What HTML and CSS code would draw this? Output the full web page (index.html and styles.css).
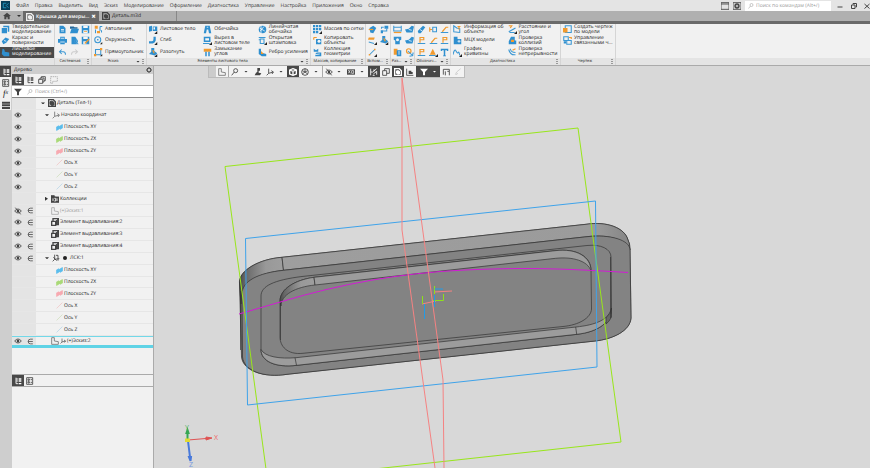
FILE: index.html
```html
<!DOCTYPE html>
<html lang="ru">
<head>
<meta charset="utf-8">
<title>Крышка для амперметра</title>
<link rel="stylesheet" href="styles.css">
</head>
<body>
<svg class="sprite" aria-hidden="true">
  <symbol id="solid" viewBox="0 0 12 12"><path class="b" d="M1 4h7v7H1zM3 1h8v8H9V3H3z"/></symbol>
  <symbol id="surface" viewBox="0 0 12 12"><path class="b" d="M1 7l5-5 5 2-4 5-4 2z"/><path class="w" d="M4 6l3 1"/></symbol>
  <symbol id="sheet" viewBox="0 0 12 12"><path class="b" d="M2 1q3 0 3 4l6 1v5H4L1 8z"/></symbol>
  <symbol id="doc" viewBox="0 0 12 12"><path class="b" d="M2 1h5l3 3v7H2z"/><path class="w" d="M4 6h4M4 8h4"/></symbol>
  <symbol id="folder" viewBox="0 0 12 12"><path class="d" d="M0 2h5l1 1h4v2H0z"/><path class="b" d="M2 5h10l-2 6H0z"/></symbol>
  <symbol id="save" viewBox="0 0 12 12"><path class="b" d="M1 1h10v10H1z"/><path class="wf" d="M3 1h6v3H3zM3 7h6v4H3z"/><path class="of" d="M4 8h4v1H4z"/></symbol>
  <symbol id="print" viewBox="0 0 12 12"><path class="b" d="M3 1h6v3h3v5H9v2H3V9H0V4h3z"/><path class="w" d="M4 3h4M3 8h6"/></symbol>
  <symbol id="preview" viewBox="0 0 12 12"><path class="b" d="M2 1h5l2 3v7H2z"/><circle class="bs" cx="8" cy="7" r="2"/><path class="bs" d="M9 9l2 2"/></symbol>
  <symbol id="saveas" viewBox="0 0 12 12"><path class="b" d="M1 1h10v10H1z"/><path class="wf" d="M3 1h6v3H3zM3 7h4v4H3z"/><path class="o" d="M5 10l6-6"/></symbol>
  <symbol id="undo" viewBox="0 0 12 12"><path class="bs" d="M5 2L2 5l3 3M2 5h5q3 0 3 4"/></symbol>
  <symbol id="redo" viewBox="0 0 12 12"><path class="g" d="M7 2l3 3-3 3M10 5H5Q2 5 2 9"/></symbol>
  <symbol id="autoline" viewBox="0 0 12 12"><path class="of" d="M1 1h4v4H1zM4 8h4v3H4z"/><path class="bs" d="M8 2v6M8 2h3M2 6v5M10 7v3"/></symbol>
  <symbol id="circle" viewBox="0 0 12 12"><circle class="bs" cx="5" cy="5" r="4"/><path class="bs" d="M4 5h2M5 4v2"/><path class="k" d="M11 8v3H8z"/></symbol>
  <symbol id="rect" viewBox="0 0 12 12"><path class="bs" d="M2 2h7v7H2z"/><path class="of" d="M0 8h3v3H0zM8 0h3v3H8z"/><path class="k" d="M11 8v3H8z"/></symbol>
  <symbol id="body" viewBox="0 0 12 12"><path class="b" d="M0 9V2l4-1v7zM5 2h6v6H5z"/><path class="wf" d="M6 3h2v3H6z"/><path class="k" d="M11 8v4H7z"/></symbol>
  <symbol id="bend" viewBox="0 0 12 12"><path class="b" d="M6 1h3v5q-1 3-4 4H0V7h4q2 0 2-3z"/><path class="k" d="M11 8v4H7z"/></symbol>
  <symbol id="unbend" viewBox="0 0 12 12"><path class="b" d="M3 0h4v4l4 3-3 3-8-2 3-3z"/><path class="o" d="M5 3l2 4"/><path class="k" d="M11 8v4H7z"/></symbol>
  <symbol id="shell" viewBox="0 0 12 12"><path class="b" d="M3 1h6l2 10H8L7 6H5L4 11H1z"/><path class="w" d="M5 3h2"/></symbol>
  <symbol id="cut" viewBox="0 0 12 12"><path class="b" d="M1 1h9v7H1z"/><path class="wf" d="M3 3h5v3H3z"/><path class="bs" d="M0 10h9"/><path class="k" d="M12 8v4H8z"/></symbol>
  <symbol id="corner" viewBox="0 0 12 12"><path class="of" d="M1 1h10v4H1z"/><path class="b" d="M3 5h2v6H3zM7 5h2v6H7z"/></symbol>
  <symbol id="ruled" viewBox="0 0 12 12"><circle class="b" cx="6" cy="6" r="5"/><path class="w" d="M4 1v10M2 4l7 4M8 2L3 8"/></symbol>
  <symbol id="stamp" viewBox="0 0 12 12"><path class="bs" d="M1 2h9M3 4h5v6H3zM1 5h2"/><path class="k" d="M12 8v4H8z"/></symbol>
  <symbol id="rib" viewBox="0 0 12 12"><path class="b" d="M1 1h3v5l7 2v3H5L1 8z"/><path class="of" d="M4 4l4 4H4z"/></symbol>
  <symbol id="grid" viewBox="0 0 12 12"><path class="b" d="M0 0h3v3H0zM4 0h3v3H4zM8 0h3v3H8zM0 4h3v3H0zM4 4h3v3H4zM8 4h3v3H8zM0 8h3v3H0zM4 8h3v3H4z"/><path class="k" d="M12 8v4H8z"/></symbol>
  <symbol id="copy" viewBox="0 0 12 12"><path class="o" d="M1 2h4M1 2v3"/><path class="b" d="M4 4h7v7H4z"/><circle class="wf" cx="8" cy="7" r="2"/></symbol>
  <symbol id="collect" viewBox="0 0 12 12"><path class="b" d="M1 1l3 2 3-2v4H1zM5 6h6v5H3V8z"/><path class="w" d="M2 9l7-1"/></symbol>
  <symbol id="h1" viewBox="0 0 12 12"><path class="b" d="M2 4l5-3 4 3-4 7-4-1z"/><path class="o" d="M1 6h6"/></symbol>
  <symbol id="h2" viewBox="0 0 12 12"><path class="b" d="M1 7h3v4H1zM6 1h5v4H6z"/><path class="bs" d="M4 8h5V5M2 5V3h3"/></symbol>
  <symbol id="h3" viewBox="0 0 12 12"><path class="of" d="M1 2h8l-1 3H0z"/><path class="bs" d="M1 8l7 2"/><path class="k" d="M12 8v4H8z"/></symbol>
  <symbol id="h4" viewBox="0 0 12 12"><path class="bs" d="M2 9l7-7"/><path class="of" d="M1 8h2v2H1zM8 1h2v2H8z"/><path class="k" d="M12 8v4H8z"/></symbol>
  <symbol id="s1" viewBox="0 0 12 12"><path class="bs" d="M1 1v7h10V1M1 3h10"/><path class="o" d="M1 10h10"/></symbol>
  <symbol id="s2" viewBox="0 0 12 12"><path class="b" d="M0 6l5-1 4-4 3 1-2 8H2z"/><path class="w" d="M5 6l4 1"/></symbol>
  <symbol id="s3" viewBox="0 0 12 12"><path class="b" d="M1 1h10v4l-2 1v5H3V6L1 5z"/><circle class="wf" cx="6" cy="5" r="2"/></symbol>
  <symbol id="s4" viewBox="0 0 12 12"><path class="of" d="M1 1h5v8H1z"/><path class="b" d="M5 3h6v8H5z"/><path class="w" d="M8 4v5"/></symbol>
  <symbol id="s5" viewBox="0 0 12 12"><circle class="o" cx="5" cy="4" r="3"/><path class="bs" d="M4 4l6 6 1-4M6 11l5-1"/></symbol>
  <symbol id="n1" viewBox="0 0 12 12"><path class="b" d="M1 8l7-7 3 2-6 8H2z"/><path class="w" d="M4 6l3 2"/></symbol>
  <symbol id="n2" viewBox="0 0 12 12"><path class="o" d="M1 3v6M1 6h3"/><path class="bs" d="M5 3h5v6H5z"/></symbol>
  <symbol id="n3" viewBox="0 0 12 12"><path class="o" d="M3 9l5-6h3"/><path class="bs" d="M1 10h10"/></symbol>
  <symbol id="n4" viewBox="0 0 12 12"><path class="o" d="M4 9V2h5v3H4"/><path class="bs" d="M1 10h10"/></symbol>
  <symbol id="datum" viewBox="0 0 12 12"><path class="of" d="M5 1l4 8H1z"/><path class="bs" d="M0 10h9"/><path class="k" d="M12 8v4H8z"/></symbol>
  <symbol id="txt" viewBox="0 0 12 12"><path class="b" d="M1 1h10v3H9.500L9 3H7v7h1v1H4v-1h1V3H3L2.500 4H1z"/></symbol>
  <symbol id="info" viewBox="0 0 12 12"><path class="bs" d="M1 1v8l8 1V5L5 4z"/><path class="o" d="M6 2h4M8 2v4"/></symbol>
  <symbol id="mass" viewBox="0 0 12 12"><path class="b" d="M1 1h5v3h5v7H1z"/><path class="w" d="M6 7h4M8 5v4"/></symbol>
  <symbol id="graph" viewBox="0 0 12 12"><path class="bs" d="M0 9q2-9 4-5t3 2 2 4"/><path class="k" d="M12 8v4H8z"/></symbol>
  <symbol id="dist" viewBox="0 0 12 12"><path class="o" d="M1 1h4l-2 3"/><path class="bs" d="M1 9l9-5M2 10h7"/><path class="k" d="M12 8v4H8z"/></symbol>
  <symbol id="collide" viewBox="0 0 12 12"><path class="b" d="M4 1h5v5h2v5H1V7z"/><path class="of" d="M4 5h4v3H4z"/></symbol>
  <symbol id="cont" viewBox="0 0 12 12"><path class="bs" d="M1 2q2 8 9 7M3 1q1 5 7 5"/><path class="o" d="M6 3l4-2"/></symbol>
  <symbol id="mkdraw" viewBox="0 0 12 12"><path class="bs" d="M3 1h8v9H3z"/><path class="of" d="M0 4h6v6H0z"/></symbol>
  <symbol id="linked" viewBox="0 0 12 12"><path class="bs" d="M1 1h6v5H1zM5 6h6v5H5z"/><path class="b" d="M1 7h3v3H1z"/><path class="o" d="M8 2h3v2"/></symbol>
  <symbol id="eye" viewBox="0 0 12 12"><path class="n" d="M1 6q5-6 10 0-5 6-10 0z"/><circle class="nf" cx="6" cy="6" r="2"/></symbol>
  <symbol id="noeye" viewBox="0 0 12 12"><path class="n" d="M1 6q5-6 10 0-5 6-10 0zM2 1l8 10"/><circle class="nf" cx="6" cy="6" r="2"/></symbol>
  <symbol id="in" viewBox="0 0 12 12"><path class="n" d="M10 2H6Q2 2 2 6t4 4h4M2 6h8"/></symbol>
  <symbol id="part" viewBox="0 0 12 12"><path class="n2" d="M1 1h7l3 3v7H1z"/><path class="nf" d="M3 4l3-1 3 2v4l-3 1-3-2z"/></symbol>
  <symbol id="axes" viewBox="0 0 12 12"><path class="n" d="M4 1v7l7-2M4 8l-3 3M8 4l3 2-2 3"/></symbol>
  <symbol id="plane" viewBox="0 0 12 12"><path class="c" d="M1 5l4-2 1 1 5-3v6L7 9 6 8l-5 3z"/></symbol>
  <symbol id="axis" viewBox="0 0 12 12"><path class="cs" d="M1 11L11 1"/></symbol>
  <symbol id="coll" viewBox="0 0 12 12"><path class="nf" d="M0 1h5l1 2h6v8H0z"/><path class="w" d="M3 5v4M5 5h2v4H5M9 5v4"/></symbol>
  <symbol id="sk" viewBox="0 0 12 12"><path class="n" d="M1 1h4v5l6 1v4H1z"/></symbol>
  <symbol id="ext" viewBox="0 0 12 12"><path class="n2" d="M3 4V1h8v9H8M1 5h6v6H1z"/><path class="nf" d="M7 5l3-3v6l-3 3z"/></symbol>
  <symbol id="lcs" viewBox="0 0 12 12"><path class="n" d="M4 1v7l7-1M4 8l-3 3M6 2h3v8M2 5l5 5"/></symbol>
  <symbol id="filter" viewBox="0 0 12 12"><path class="nf" d="M0 1h12L7.500 6v5h-3V6z"/></symbol>
  <symbol id="mag" viewBox="0 0 12 12"><circle class="n" cx="7" cy="4" r="3"/><path class="n" d="M5 6l-4 5"/></symbol>
  <symbol id="treei" viewBox="0 0 12 12"><path class="n" d="M3 1v9h3M3 3h3M3 6h3"/><path class="nf" d="M7 2h4v2H7zM7 5h4v2H7zM7 9h4v2H7z"/></symbol>
  <symbol id="listi" viewBox="0 0 12 12"><path class="n" d="M1 1h9v10H1zM3 3h2v2H3zM3 7h2v2H3zM7 4h2M7 8h2"/></symbol>
  <symbol id="bars" viewBox="0 0 12 12"><path class="nf" d="M0 1h12v3H0zM0 5h12v3H0zM0 9h12v3H0z"/></symbol>
  <symbol id="group" viewBox="0 0 12 12"><path class="n" d="M1 5h6v6H1zM3 5V3h6v6H7M5 3V1h6v6H9"/></symbol>
  <symbol id="mark" viewBox="0 0 12 12"><path class="n" stroke-dasharray="2 1" d="M1 1h10v7H4v3H1z"/></symbol>
  <symbol id="gear" viewBox="0 0 12 12"><circle class="n2" cx="6" cy="6" r="4"/><path class="n" d="M6 0v12M0 6h12M2 2l8 8M10 2l-8 8"/><circle class="wf" cx="6" cy="6" r="2"/></symbol>
  <symbol id="home" viewBox="0 0 12 12"><path class="nf" d="M6 1l6 5h-2v5H7V8H5v3H2V6H0z"/></symbol>
  <symbol id="cube" viewBox="0 0 12 12"><path class="n2" d="M1 3l5-2 5 2v6l-5 2-5-2zM1 3l5 2 5-2M6 5v6"/></symbol>
  <symbol id="orient" viewBox="0 0 12 12"><circle class="n" cx="6" cy="6" r="5"/><path class="n" d="M6 1v5l4 3M6 6L2 9M2 4l4 2 4-2"/></symbol>
  <symbol id="place" viewBox="0 0 12 12"><path class="nf" d="M5 0h4v4H7v3l4 1-2 3H1l2-4 2-1z"/></symbol>
  <symbol id="hide" viewBox="0 0 12 12"><path class="nf" d="M0 2h12v8H0z"/><path class="w" d="M2 3l3 5M5 3L2 8M7 4h3v4H7z"/></symbol>
  <symbol id="snap" viewBox="0 0 12 12"><path class="n" d="M1 1v10M1 6h3l6-5M6 2v3M10 5v5M5 9l5-4M4 11h3"/></symbol>
  <symbol id="boxes" viewBox="0 0 12 12"><path class="n" d="M1 4h6v7H1zM4 4V1h7v7H7"/></symbol>
  <symbol id="sect" viewBox="0 0 12 12"><path class="n" d="M1 1v10h10"/><path class="nf" d="M4 4h4v2h2v3H4z"/></symbol>
  <symbol id="meas" viewBox="0 0 12 12"><path class="n" d="M2 10V2h9v3M5 5v6M8 5h3v6"/></symbol>
  <symbol id="brush" viewBox="0 0 12 12"><path class="g" d="M2 10l2-4 6-5M3 10l3-2"/></symbol>
  <symbol id="window" viewBox="0 0 12 12"><path class="n" d="M0 1h12v10H0zM0 3h12"/></symbol>
  <symbol id="shot" viewBox="0 0 12 12"><path class="n" d="M0 1h12v10H0z"/><circle class="nf" cx="6" cy="6" r="4"/><path class="w" d="M5 5h2v2H5z"/></symbol>
  <symbol id="min" viewBox="0 0 12 12"><path class="n2" d="M1 8h10"/></symbol>
  <symbol id="restore" viewBox="0 0 12 12"><path class="n2" d="M1 4h7v7H1zM4 3V1h7v7H9"/></symbol>
  <symbol id="close" viewBox="0 0 12 12"><path class="n2" d="M1 2l10 9M11 2L1 11"/></symbol>
  <symbol id="logo" viewBox="0 0 12 12"><path fill="#073c58" d="M0 0h12v12H0z"/><path stroke="#28a9d5" fill="none" d="M7 3H3v6h4M7 6l3-3M7 6l3 3"/></symbol>
</svg>

<header>
  <nav class="menu" aria-label="Главное меню">
    <svg class="i logo"><use href="#logo"/></svg>
    <a href="#">Файл</a><a href="#">Правка</a><a href="#">Выделить</a><a href="#">Вид</a><a href="#">Эскиз</a><a href="#">Моделирование</a><a href="#">Оформление</a><a href="#">Диагностика</a><a href="#">Управление</a><a href="#">Настройка</a><a href="#">Приложения</a><a href="#">Окно</a><a href="#">Справка</a>
    <div class="winbar">
      <button aria-label="Окна"><svg class="i"><use href="#window"/></svg></button>
      <button aria-label="Снимок"><svg class="i"><use href="#shot"/></svg></button>
      <label class="cmd"><svg class="i faint"><use href="#mag"/></svg><input type="text" aria-label="Поиск по командам" placeholder="Поиск по командам (Alt+/)"></label>
      <button class="wb" aria-label="Свернуть"><svg class="i"><use href="#min"/></svg></button>
      <button class="wb" aria-label="Восстановить"><svg class="i"><use href="#restore"/></svg></button>
      <button class="wb" aria-label="Закрыть"><svg class="i"><use href="#close"/></svg></button>
    </div>
  </nav>
  <div class="tabs">
    <button class="hm" aria-label="Домой"><svg class="i"><use href="#home"/></svg><i class="dd"></i></button>
    <button class="tab on"><svg class="i"><use href="#part"/></svg><span>Крышка для амеры...</span><b>×</b></button>
    <button class="tab"><svg class="i"><use href="#part"/></svg><span>Деталь.m3d</span></button>
  </div>
</header>

<div class="ribbon">
  <section class="grp modes">
    <div class="tools c1">
      <button><svg class="i"><use href="#solid"/></svg><span>Твердотельное<br>моделирование</span></button>
      <button><svg class="i"><use href="#surface"/></svg><span>Каркас и<br>поверхности</span></button>
      <button class="on"><svg class="i"><use href="#sheet"/></svg><span>Листовое<br>моделирование</span></button>
    </div>
    <footer><span>˅</span></footer>
  </section>
  <section class="grp sys">
    <div class="tools c3">
      <button aria-label="Создать"><svg class="i"><use href="#doc"/></svg></button><button aria-label="Открыть"><svg class="i"><use href="#folder"/></svg></button><button aria-label="Сохранить"><svg class="i"><use href="#save"/></svg></button>
      <button aria-label="Печать"><svg class="i"><use href="#print"/></svg></button><button aria-label="Просмотр"><svg class="i"><use href="#preview"/></svg></button><button aria-label="Сохранить как"><svg class="i"><use href="#saveas"/></svg></button>
      <button aria-label="Отменить"><svg class="i"><use href="#undo"/></svg></button><button aria-label="Повторить"><svg class="i"><use href="#redo"/></svg></button>
    </div>
    <footer><span>Системная</span><i class="grip"></i></footer>
  </section>
  <section class="grp sketch">
    <div class="tools c1">
      <button><svg class="i"><use href="#autoline"/></svg><span>Автолиния</span></button>
      <button><svg class="i"><use href="#circle"/></svg><span>Окружность</span></button>
      <button><svg class="i"><use href="#rect"/></svg><span>Прямоугольник</span></button>
    </div>
    <footer><span>Эскиз</span><i class="dd"></i><i class="grip"></i></footer>
  </section>
  <section class="grp elems">
    <div class="tools c3">
      <button><svg class="i"><use href="#body"/></svg><span>Листовое тело</span></button>
      <button><svg class="i"><use href="#shell"/></svg><span>Обечайка</span></button>
      <button><svg class="i"><use href="#ruled"/></svg><span>Линейчатая<br>обечайка</span></button>
      <button><svg class="i"><use href="#bend"/></svg><span>Сгиб</span></button>
      <button><svg class="i"><use href="#cut"/></svg><span>Вырез в<br>листовом теле</span></button>
      <button><svg class="i"><use href="#stamp"/></svg><span>Открытая<br>штамповка</span></button>
      <button><svg class="i"><use href="#unbend"/></svg><span>Разогнуть</span></button>
      <button><svg class="i"><use href="#corner"/></svg><span>Замыкание<br>углов</span></button>
      <button><svg class="i"><use href="#rib"/></svg><span>Ребро усиления</span></button>
    </div>
    <footer><span>Элементы листового тела</span><i class="dd"></i><i class="grip"></i></footer>
  </section>
  <section class="grp arr">
    <div class="tools c1">
      <button><svg class="i"><use href="#grid"/></svg><span>Массив по сетке</span></button>
      <button><svg class="i"><use href="#copy"/></svg><span>Копировать<br>объекты</span></button>
      <button><svg class="i"><use href="#collect"/></svg><span>Коллекция<br>геометрии</span></button>
    </div>
    <footer><span>Массив, копирование</span><i class="grip"></i></footer>
  </section>
  <section class="grp helper">
    <div class="tools c2">
      <button aria-label="Точка"><svg class="i"><use href="#h1"/></svg></button><button aria-label="Система координат"><svg class="i"><use href="#h2"/></svg></button>
      <button aria-label="Плоскость"><svg class="i"><use href="#h3"/></svg></button><button aria-label="Привязка"><svg class="i"><use href="#unbend"/></svg></button>
      <button aria-label="Ось"><svg class="i"><use href="#h4"/></svg></button>
    </div>
    <footer><span>Вспом...</span><i class="grip"></i></footer>
  </section>
  <section class="grp dims">
    <div class="tools c2">
      <button aria-label="Размер 1"><svg class="i"><use href="#s1"/></svg></button><button aria-label="Размер 2"><svg class="i"><use href="#s2"/></svg></button>
      <button aria-label="Размер 3"><svg class="i"><use href="#s3"/></svg></button><button aria-label="Размер 4"><svg class="i"><use href="#s2"/></svg></button>
      <button aria-label="Размер 5"><svg class="i"><use href="#s4"/></svg></button><button aria-label="Размер 6"><svg class="i"><use href="#s5"/></svg></button>
    </div>
    <footer><span>Раз...</span><i class="dd"></i><i class="grip"></i></footer>
  </section>
  <section class="grp notes">
    <div class="tools c3">
      <button aria-label="Резьба"><svg class="i"><use href="#n1"/></svg></button><button aria-label="База"><svg class="i"><use href="#n2"/></svg></button><button aria-label="Выноска"><svg class="i"><use href="#n3"/></svg></button>
      <button aria-label="Клеймо"><svg class="i"><use href="#n4"/></svg></button><button aria-label="Шероховатость"><svg class="i"><use href="#n3"/></svg></button><button aria-label="Маркировка"><svg class="i"><use href="#n4"/></svg></button>
      <button aria-label="Допуск"><svg class="i"><use href="#n4"/></svg></button><button aria-label="Обозначение"><svg class="i"><use href="#datum"/></svg></button><button aria-label="Надпись"><svg class="i"><use href="#txt"/></svg></button>
    </div>
    <footer><span>Обознач...</span><i class="dd"></i><i class="grip"></i></footer>
  </section>
  <section class="grp diag">
    <div class="tools c2">
      <button><svg class="i"><use href="#info"/></svg><span>Информация об<br>объекте</span></button>
      <button><svg class="i"><use href="#dist"/></svg><span>Расстояние и<br>угол</span></button>
      <button><svg class="i"><use href="#mass"/></svg><span>МЦХ модели</span></button>
      <button><svg class="i"><use href="#collide"/></svg><span>Проверка<br>коллизий</span></button>
      <button><svg class="i"><use href="#graph"/></svg><span>График<br>кривизны</span></button>
      <button><svg class="i"><use href="#cont"/></svg><span>Проверка<br>непрерывности</span></button>
    </div>
    <footer><span>Диагностика</span><i class="grip"></i></footer>
  </section>
  <section class="grp draw">
    <div class="tools c1">
      <button><svg class="i"><use href="#mkdraw"/></svg><span>Создать чертеж<br>по модели</span></button>
      <button><svg class="i"><use href="#linked"/></svg><span>Управление<br>связанными ч...</span></button>
    </div>
    <footer><span>Чертеж</span><i class="grip"></i></footer>
  </section>
  <div class="rest"></div>
</div>

<main>
  <nav class="rail" aria-label="Панели">
    <button class="on" aria-label="Дерево"><svg class="i"><use href="#treei"/></svg></button>
    <button aria-label="Параметры"><svg class="i"><use href="#listi"/></svg></button>
    <button class="fx" aria-label="Переменные">f<sub>x</sub></button>
    <button aria-label="Меню"><svg class="i"><use href="#bars"/></svg></button>
  </nav>
  <aside class="panel">
    <h2><span>Дерево</span><svg class="i"><use href="#gear"/></svg></h2>
    <div class="ptools">
      <button class="on" aria-label="Структура"><svg class="i"><use href="#treei"/></svg></button>
      <button aria-label="История"><svg class="i"><use href="#treei"/></svg></button>
      <button aria-label="Группы"><svg class="i"><use href="#group"/></svg></button>
      <button aria-label="Область"><svg class="i faint"><use href="#mark"/></svg></button>
    </div>
    <label class="find"><svg class="i"><use href="#filter"/></svg><svg class="i faint"><use href="#mag"/></svg><input type="text" aria-label="Поиск" placeholder="Поиск (Ctrl+/)"></label>
    <ul class="tree">
      <li><span class="v"></span><span class="n l1"><i class="dd"></i><svg class="i"><use href="#part"/></svg>Деталь (Тел-1)</span></li>
      <li><span class="v"><svg class="i"><use href="#eye"/></svg></span><span class="n l2"><i class="dd"></i><svg class="i soft"><use href="#axes"/></svg>Начало координат</span></li>
      <li><span class="v"><svg class="i"><use href="#eye"/></svg></span><span class="n l3"><svg class="i xy"><use href="#plane"/></svg>Плоскость XY</span></li>
      <li><span class="v"><svg class="i"><use href="#eye"/></svg></span><span class="n l3"><svg class="i zx"><use href="#plane"/></svg>Плоскость ZX</span></li>
      <li><span class="v"><svg class="i"><use href="#eye"/></svg></span><span class="n l3"><svg class="i zy"><use href="#plane"/></svg>Плоскость ZY</span></li>
      <li><span class="v"><svg class="i"><use href="#eye"/></svg></span><span class="n l3"><svg class="i ax"><use href="#axis"/></svg>Ось X</span></li>
      <li><span class="v"><svg class="i"><use href="#eye"/></svg></span><span class="n l3"><svg class="i ay"><use href="#axis"/></svg>Ось Y</span></li>
      <li><span class="v"><svg class="i"><use href="#eye"/></svg></span><span class="n l3"><svg class="i az"><use href="#axis"/></svg>Ось Z</span></li>
      <li><span class="v"></span><span class="n l2"><i class="dd shut"></i><svg class="i"><use href="#coll"/></svg>Коллекции</span></li>
      <li><span class="v"><svg class="i"><use href="#noeye"/></svg><svg class="i"><use href="#in"/></svg></span><span class="n l2 leaf off"><svg class="i faint"><use href="#sk"/></svg>(+)Эскиз:1</span></li>
      <li><span class="v"><svg class="i"><use href="#eye"/></svg><svg class="i"><use href="#in"/></svg></span><span class="n l2 leaf"><svg class="i"><use href="#ext"/></svg>Элемент выдавливания:2</span></li>
      <li><span class="v"><svg class="i"><use href="#eye"/></svg><svg class="i"><use href="#in"/></svg></span><span class="n l2 leaf"><svg class="i"><use href="#ext"/></svg>Элемент выдавливания:3</span></li>
      <li><span class="v"><svg class="i"><use href="#eye"/></svg><svg class="i"><use href="#in"/></svg></span><span class="n l2 leaf"><svg class="i"><use href="#ext"/></svg>Элемент выдавливания:4</span></li>
      <li><span class="v"><svg class="i"><use href="#eye"/></svg><svg class="i"><use href="#in"/></svg></span><span class="n l2"><i class="dd"></i><svg class="i"><use href="#lcs"/></svg><i class="dot"></i>ЛСК:1</span></li>
      <li><span class="v"></span><span class="n l3"><svg class="i xy"><use href="#plane"/></svg>Плоскость XY</span></li>
      <li><span class="v"></span><span class="n l3"><svg class="i zx"><use href="#plane"/></svg>Плоскость ZX</span></li>
      <li><span class="v"></span><span class="n l3"><svg class="i zy"><use href="#plane"/></svg>Плоскость ZY</span></li>
      <li><span class="v"></span><span class="n l3"><svg class="i ax"><use href="#axis"/></svg>Ось X</span></li>
      <li><span class="v"></span><span class="n l3"><svg class="i ay"><use href="#axis"/></svg>Ось Y</span></li>
      <li><span class="v"></span><span class="n l3"><svg class="i az"><use href="#axis"/></svg>Ось Z</span></li>
      <li class="cur"><span class="v"><svg class="i"><use href="#eye"/></svg><svg class="i"><use href="#in"/></svg></span><span class="n l2 leaf"><svg class="i soft"><use href="#sk"/></svg><svg class="i lock"><use href="#axes"/></svg>(+)Эскиз:2</span></li>
    </ul>
    <div class="ptabs">
      <button class="on" aria-label="Дерево"><svg class="i"><use href="#treei"/></svg></button>
      <button aria-label="Список"><svg class="i"><use href="#listi"/></svg></button>
    </div>
    <div class="pend"></div>
  </aside>
  <section class="view">
    <svg class="scene" viewBox="154 66 716 402" preserveAspectRatio="xMinYMin slice" role="img" aria-label="Модель крышки">
      <defs>
        <linearGradient id="side"><stop offset="0" stop-color="#484848"/><stop offset=".12" stop-color="#666"/><stop offset=".6" stop-color="#999"/><stop offset="1" stop-color="#9e9e9e"/></linearGradient>
        <linearGradient id="top"><stop offset="0" stop-color="#9e9e9e"/><stop offset=".9" stop-color="#9b9b9b"/><stop offset="1" stop-color="#858585"/></linearGradient>
      </defs>
      <g class="edge">
        <path fill="#666" d="M239.500 284C238 270 260 259 282 257.300L586 224.300C607 221 625 228 628 240Q630 243 630 250L631 318C630 331 613 339 595 341L287 374.300C264 378 243 371 241.500 357Z"/>
        <path fill="url(#side)" d="M239.500 284C238 270 260 259 282 257.300L283.500 270.300C258 273 242 283 242 294L241 304Z"/>
        <path fill="url(#top)" d="M282 257.300L586 224.300C607 221 625 228 628 240Q630 243 630 250C626 240 610 234 587 236.700L283.500 270.300Z"/>
        <path fill="#838383" d="M242 294C242 281 258 273 283.500 270.300L587 236.700C610 234 630 240 630 250L631 318C630 331 613 339 595 341L287 374.300C264 378 244 371 242.500 357Z"/>
        <path fill="#838383" d="M261 296C261 286 274 280 302 276.500L587 245.500C601 244 611 249 611 257L611.500 308C612 322 598 332 577 334.300L297 365.300C275 368 261 361 261 350Z"/>
        <path fill="#9c9c9c" d="M261 349.500C265 357 280 359 296 357.700L576 327C595 325 609 320 611.500 308C612 322 598 332 577 334.300L297 365.300C275 368 261 361 261 349.500Z"/>
        <path fill="#666" d="M606 318Q611 314 611.500 308V317Q609 322 606 324Z"/>
        <path fill="#838383" d="M280 301C280 289 295 280 314 277.300L555 250.700C577 248 591 257 591 270L591.500 309C591 318 579 325 563 326.500L303 353.300C287 355 280 346 280 337Z"/>
        <path fill="url(#side)" d="M280 301C280 289 295 280 314 277.300L315 285C295 287 281 295 281 306Z"/>
        <path fill="#9c9c9c" d="M314 277.300L555 250.700C577 248 591 257 591 271C588 261 573 256.500 555.700 258.300L315 285Z"/>
        <path fill="none" d="M295 357.700L296.500 365.300M575.700 327L576.700 334.300M280.500 303V340M610.500 257V318M240.500 291V350"/>
      </g>
      <path class="ln" stroke="#d21bd5" d="M239 314L282 301.500C340 284 400 273 465 270S570 269 628 272.500"/>
      <path class="ln" stroke="#98e61b" d="M225 166.500L578 128 621 442 370 469.500M225 166.500L266 469"/>
      <path class="ln" stroke="#3fa3ea" d="M245.500 238.500L595.500 201 597 367 247.500 405Z"/>
      <path class="ln" stroke="#f58282" d="M402 66V230L435 468M402 78L420 210 443 380 444 468M422 304L436 301M434 292L452 291"/>
      <path class="ln" stroke="#8de01c" d="M434.500 286V294M422.500 296V304M433 300.500H443.500V294"/>
      <path class="ln" stroke="#219be8" d="M424.500 304V319M434.500 289H443M434.500 295V307"/>
      <path stroke="#df5353" stroke-width="1" fill="#df5353" d="M188 440L206 438.500V437L212 438 206 440V438.500"/>
      <path stroke="#4879da" stroke-width="2" fill="#4879da" d="M188 441L190 457M189 457H191L190.500 461Z"/>
      <path stroke="#35a653" stroke-width="2" fill="#35a653" d="M187.500 440V432M186.500 433H188.500L187.500 430Z"/>
      <path fill="#e1da32" d="M185 438.500H190V442H185z"/>
      <text x="214" y="440" fill="#ee6868">X</text><text x="185" y="430" fill="#59b66c">Y</text><text x="189" y="467" fill="#7799df">Z</text>
    </svg>
    <div class="vtools">
      <button class="hd" aria-label="Панель"></button>
      <button aria-label="Эскиз"><svg class="i soft"><use href="#sk"/></svg></button>
      <button class="sep m" aria-label="Масштаб"><svg class="i"><use href="#mag"/></svg></button><i class="dd"></i>
      <button aria-label="Размещение"><svg class="i"><use href="#place"/></svg></button>
      <button aria-label="Оси"><svg class="i"><use href="#axes"/></svg></button><i class="dd"></i>
      <button class="on" aria-label="Полутоновое"><svg class="i"><use href="#cube"/></svg></button>
      <button aria-label="Ориентация"><svg class="i"><use href="#orient"/></svg></button><i class="dd"></i>
      <button class="sep" aria-label="Скрыть"><svg class="i"><use href="#noeye"/></svg></button><i class="dd"></i>
      <button aria-label="Видимость"><svg class="i"><use href="#hide"/></svg></button><i class="dd"></i>
      <button class="on" aria-label="Привязки"><svg class="i"><use href="#snap"/></svg></button>
      <button aria-label="Слои"><svg class="i"><use href="#boxes"/></svg></button>
      <button class="on" aria-label="Сечение"><svg class="i"><use href="#part"/></svg></button>
      <button aria-label="Разрез"><svg class="i"><use href="#sect"/></svg></button>
      <button class="on wide" aria-label="Фильтр"><svg class="i"><use href="#filter"/></svg><i class="dd"></i></button>
      <button aria-label="Измерить"><svg class="i"><use href="#meas"/></svg></button>
      <button aria-label="Кисть"><svg class="i"><use href="#brush"/></svg></button>
    </div>
  </section>
</main>
</body>
</html>
```
FILE: styles.css
```css
* { box-sizing: border-box; }
body {
  margin: 0;
  height: 100vh;
  display: flex;
  flex-direction: column;
  overflow: hidden;
  background: #d8d8d8;
  color: #222;
  font: 5px/6px "Open Sans", "Noto Sans", sans-serif;
  text-rendering: geometricPrecision;
}
button, input { font: inherit; color: inherit; background: none; border: 0; padding: 0; margin: 0; min-width: 0; text-rendering: inherit; }
button { display: flex; align-items: center; text-align: left; white-space: nowrap; }
input { outline: 0; flex: 1; }
input::placeholder { color: #999; opacity: 1; }
a { color: inherit; text-decoration: none; }
.sprite { position: absolute; width: 0; height: 0; }
.i { width: 8px; height: 8px; flex: none; color: #444; }

/* Icon paint */
.b { fill: #2f8fcf; }
.d { fill: #24689b; }
.bs { fill: none; stroke: #3b97d3; stroke-width: 1.4; }
.o { fill: none; stroke: #f19a2e; stroke-width: 1.6; }
.of { fill: #f19a2e; }
.w { fill: none; stroke: #fff; }
.wf { fill: #f5f5f5; }
.g { fill: none; stroke: #ccc; stroke-width: 1.4; }
.k { fill: #222; }
.n { fill: none; stroke: currentColor; stroke-width: 1.3; }
.n2 { fill: none; stroke: currentColor; stroke-width: 2; }
.nf { fill: currentColor; }
.c { fill: currentColor; }
.cs { stroke: currentColor; stroke-width: 1; }
.faint { color: #aaa; }
.soft { color: #777; }

.dd { width: 4px; height: 2px; flex: none; background: #333; clip-path: polygon(0 0, 100% 0, 50% 100%); }
.dd.shut { width: 3px; height: 4px; clip-path: polygon(0 0, 100% 50%, 0 100%); }

/* Menu and document tabs */
.menu { display: flex; align-items: center; height: 11px; gap: 6px; background: #e4e4e4; color: #333; }
.menu .logo { width: 9px; height: 9px; margin-left: 1px; }
.winbar { display: flex; align-items: center; gap: 4px; margin-left: auto; }
.cmd { display: flex; align-items: center; gap: 2px; width: 86px; height: 10px; padding: 0 3px; background: #fff; }
.cmd .i { width: 6px; height: 6px; }
.wb { width: 10px; justify-content: center; }
.wb .i { width: 6px; height: 6px; }
.wb:last-child { width: 7px; }
.tabs { display: flex; height: 13px; background: #b0b0b0; border-bottom: 3px solid #6a6a6a; }
.hm { width: 23px; gap: 6px; padding-left: 3px; }
.tab { width: 78px; gap: 2px; padding: 0 3px; color: #222; border-right: 1px solid #888; }
.tab.on { width: 76px; height: 11px; background: #6a6a6a; color: #fff; border: 0; font-weight: 600; }
.tab.on .i { color: #eee; }
.tab b { margin-left: auto; font-size: 8px; }

/* Ribbon */
.ribbon { display: flex; height: 42px; background: #f1f1f1; border-bottom: 1px solid #aaa; }
.grp { display: flex; flex-direction: column; flex: none; border-right: 1px solid #d5d5d5; }
.tools { flex: 1; display: grid; grid-template-rows: repeat(3, 1fr); }
.c1 { grid-template-columns: 1fr; }
.c2 { grid-template-columns: repeat(2, 1fr); }
.c3 { grid-template-columns: repeat(3, 1fr); }
.tools button { gap: 2px; padding-left: 2px; line-height: 5px; min-height: 0; }
.tools .i { width: 9px; height: 9px; }
.grp footer { display: flex; align-items: center; height: 7px; gap: 2px; padding-right: 2px; background: #e4e4e4; font-size: 4px; white-space: nowrap; }
.grp footer span { flex: 1; text-align: center; }
.grip { width: 2px; height: 5px; flex: none; border: 1px dotted #999; border-width: 0 1px; }
.modes { width: 55px; }
.grp.modes button { padding-left: 1px; }
.modes button.on { background: #4a4a4a; color: #fff; }
.sys { width: 37px; }
.sys .tools { padding-left: 1px; }
.sketch { width: 55px; }
.elems { width: 164px; }
.arr { width: 55px; }
.helper { width: 25px; }
.dims { width: 24px; }
.notes { width: 36px; }
.diag { width: 110px; }
.draw { width: 55px; }
.rest { flex: 1; background: linear-gradient(#f1f1f1 34px, #e4e4e4 34px); }

/* Workspace */
main { flex: 1; display: flex; min-height: 0; }
.rail { width: 12px; flex: none; background: #cecece; }
.rail button { width: 11px; height: 11px; justify-content: center; background: #f0f0f0; }
.rail button.on, .ptools .on, .ptabs .on, .vtools .on { background: #484848; }
.on > .i { color: #fff; }
.rail .fx { font: italic 9px/9px "Liberation Serif", serif; }
.fx sub { font-size: 6px; }
.panel { width: 142px; flex: none; display: flex; flex-direction: column; background: #f1f1f1; border-right: 1px solid #aaa; }
.panel h2 { display: flex; align-items: center; justify-content: space-between; height: 8px; margin: 0; padding: 0 1px 0 2px; background: #cdcdcd; font: inherit; }
.panel h2 .i { width: 6px; height: 6px; }
.ptools { display: flex; height: 12px; border-bottom: 1px solid #aaa; }
.ptools button, .ptabs button { width: 12px; justify-content: center; }
.find { display: flex; align-items: center; gap: 5px; height: 12px; padding: 0 2px; background: #fff; border-bottom: 1px solid #888; }
.find .faint { width: 6px; height: 6px; }
.find input { margin-left: -3px; }
.tree { list-style: none; margin: 0; padding: 0; height: 250px; display: grid; grid-auto-rows: 1fr; }
.tree li { display: flex; min-height: 0; border-bottom: 1px solid #e6e6e6; }
.v { width: 24px; display: flex; align-items: center; gap: 5px; padding-left: 2px; background: #e4e4e4; }
.v .i { width: 7px; height: 7px; }
.v .i:first-child { width: 8px; height: 8px; }
.n { flex: 1; display: flex; align-items: center; gap: 1px; white-space: nowrap; }
span.n .dd { margin-right: 2px; }
.l1 { padding-left: 5px; }
.l2 { padding-left: 9px; }
.leaf { padding-left: 15px; }
.l3 { padding-left: 20px; }
.off { color: #999; }
.xy { color: #5bbdec; }
.zx { color: #a9d977; }
.zy { color: #f7a9b1; }
.ax { color: #f0b9b9; }
.ay { color: #c5d9ad; }
.az { color: #a5cde4; }
.l3 .i { width: 7px; height: 7px; }
.dot { width: 4px; height: 4px; margin: 0 2px; border-radius: 50%; background: #222; }
.lock { width: 6px; height: 6px; }
.tree .cur { border-top: 1px solid #72d8e8; border-bottom: 3px solid #5fd3e6; }
.ptabs { display: flex; height: 13px; margin-top: 26px; border: 1px solid #aaa; border-width: 1px 0; }
.pend { flex: 1; }
.view { position: relative; flex: 1; min-width: 0; background: #d8d8d8; }
.scene { display: block; width: 100%; height: 100%; }
.scene text { font-size: 7px; }
.edge path { stroke: #333; stroke-width: .7; }
.ln { fill: none; stroke-width: 1; }

/* Floating view toolbar, drawn over the scene */
.vtools { position: absolute; left: 54px; top: 0; display: flex; align-items: center; height: 12px; background: #f3f3f3; border: 1px solid #bbb; border-top: 0; }
.vtools button { width: 12px; height: 11px; justify-content: center; }
.vtools > .dd { margin: 0 4px 0 3px; }
.vtools .hd { width: 7px; background: #ccc; }
.vtools .sep { border-left: 1px solid #aaa; }
.vtools .m { width: 13px; }
.vtools .wide { width: 24px; gap: 5px; }
.vtools .wide .dd { background: #fff; }
```
